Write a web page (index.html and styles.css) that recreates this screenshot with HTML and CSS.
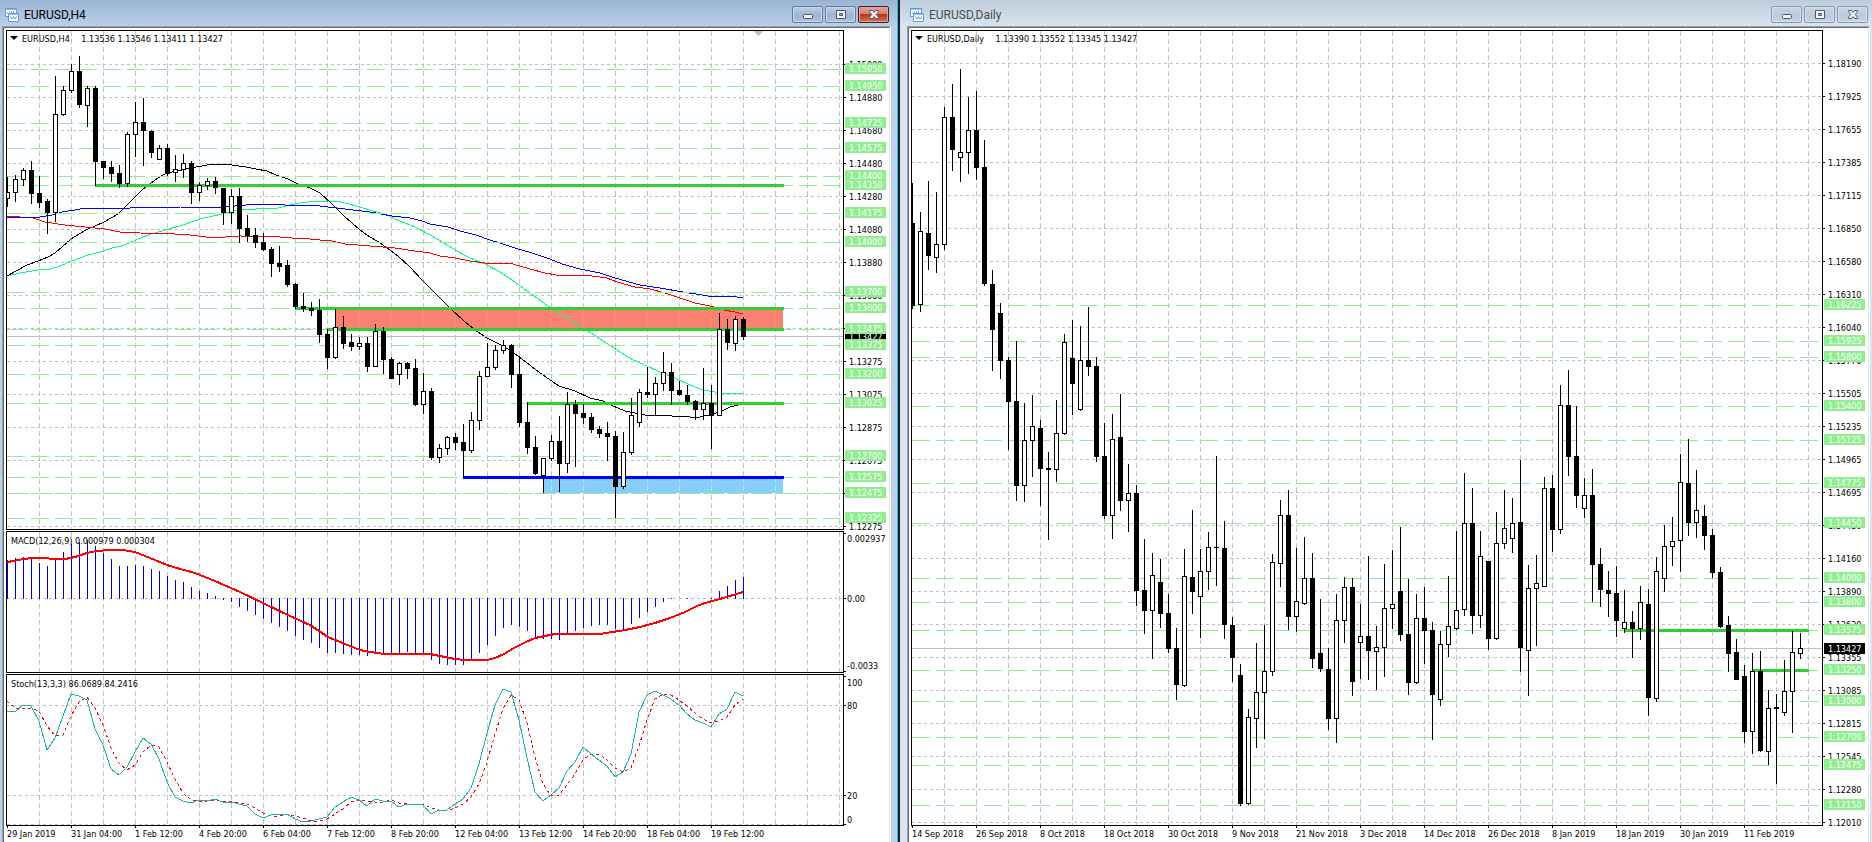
FILE: index.html
```html
<!DOCTYPE html>
<html lang="en">
<head>
    <meta charset="UTF-8">
    <meta name="viewport" content="width=device-width, initial-scale=1.0">
    <title>EURUSD</title>
    <link rel="stylesheet" href="styles.css">
</head>
<body>

    <!-- icons shared by both windows -->
    <svg class="sprite" aria-hidden="true">
      <symbol id="icon-chart" viewBox="0 0 14 14">
        <path d="M.5.5h11v8H.5z" fill="#fff" stroke="#5b9be8"/>
        <path d="M1 1.5h10" stroke="#8ebcf2"/>
        <path d="M2.5 6V4.500M4.500 5V3.500M6.500 5V3.500M8.500 5V3" stroke="#5b9be8"/>
        <path d="M3.500 5.500h10v8h-10z" fill="#fff" stroke="#5b9be8"/>
        <path d="M4 6.500h9" stroke="#8ebcf2"/>
        <path d="M5.500 8.500l1.500 2.500 1.500-2.500 1.500 2.500 1.500-2.500" fill="none" stroke="#5b9be8"/>
      </symbol>
      <symbol id="icon-min" viewBox="0 0 12 11">
        <rect x="1.500" y="5.500" width="9" height="4" rx="1" fill="#f4f4f4" stroke="#535666"/>
      </symbol>
      <symbol id="icon-max" viewBox="0 0 12 11">
        <path d="M1.500 1.500h9v8h-9zM4.500 4.500v2h3v-2z" fill="#f4f4f4" fill-rule="evenodd" stroke="#535666"/>
      </symbol>
      <symbol id="icon-close" viewBox="0 0 12 11">
        <path d="M1.500 1.500h3L6 3.500l1.500-2h3v1.200L8.200 5.500l2.300 2.800v1.200h-3L6 7.500l-1.500 2h-3V8.300l2.300-2.800-2.300-2.800z" fill="#f4f4f4" stroke="#535666"/>
      </symbol>
    </svg>

    <main class="desktop">
      <section class="window is-active">
        <header class="titlebar">
          <svg class="titlebar-icon"><use href="#icon-chart"/></svg>
          <h1>EURUSD,H4</h1>
          <button type="button" aria-label="Minimize"><svg><use href="#icon-min"/></svg></button>
          <button type="button" aria-label="Maximize"><svg><use href="#icon-max"/></svg></button>
          <button type="button" class="close" aria-label="Close"><svg><use href="#icon-close"/></svg></button>
        </header>
        <div class="client">
          <div class="chart">
            <div class="panel price">
              <div class="plot">
                <svg id="h4-plot"></svg>
                <p class="caption symbol"><span>EURUSD,H4</span> 1.13536 1.13546 1.13411 1.13427</p>
              </div>
              <svg class="scale" id="h4-scale"></svg>
            </div>
            <div class="panel macd">
              <div class="plot">
                <svg id="macd-plot"></svg>
                <p class="caption">MACD(12,26,9) 0.000979 0.000304</p>
              </div>
              <svg class="scale" id="macd-scale"></svg>
            </div>
            <div class="panel stoch">
              <div class="plot">
                <svg id="stoch-plot"></svg>
                <p class="caption">Stoch(13,3,3) 86.0689 84.2416</p>
              </div>
              <svg class="scale" id="stoch-scale"></svg>
            </div>
            <ol class="time-axis">
              <li>29 Jan 2019</li>
              <li>31 Jan 04:00</li>
              <li>1 Feb 12:00</li>
              <li>4 Feb 20:00</li>
              <li>6 Feb 04:00</li>
              <li>7 Feb 12:00</li>
              <li>8 Feb 20:00</li>
              <li>12 Feb 04:00</li>
              <li>13 Feb 12:00</li>
              <li>14 Feb 20:00</li>
              <li>18 Feb 04:00</li>
              <li>19 Feb 12:00</li>
            </ol>
          </div>
        </div>
      </section>

      <section class="window">
        <header class="titlebar">
          <svg class="titlebar-icon"><use href="#icon-chart"/></svg>
          <h1>EURUSD,Daily</h1>
          <button type="button" aria-label="Minimize"><svg><use href="#icon-min"/></svg></button>
          <button type="button" aria-label="Maximize"><svg><use href="#icon-max"/></svg></button>
          <button type="button" aria-label="Close"><svg><use href="#icon-close"/></svg></button>
        </header>
        <div class="client">
          <div class="chart">
            <div class="panel price">
              <div class="plot">
                <svg id="daily-plot"></svg>
                <p class="caption symbol"><span>EURUSD,Daily</span> 1.13390 1.13552 1.13345 1.13427</p>
              </div>
              <svg class="scale" id="daily-scale"></svg>
            </div>
            <ol class="time-axis">
              <li>14 Sep 2018</li>
              <li>26 Sep 2018</li>
              <li>8 Oct 2018</li>
              <li>18 Oct 2018</li>
              <li>30 Oct 2018</li>
              <li>9 Nov 2018</li>
              <li>21 Nov 2018</li>
              <li>3 Dec 2018</li>
              <li>14 Dec 2018</li>
              <li>26 Dec 2018</li>
              <li>8 Jan 2019</li>
              <li>18 Jan 2019</li>
              <li>30 Jan 2019</li>
              <li>11 Feb 2019</li>
            </ol>
          </div>
        </div>
      </section>
    </main>

    <script src="charts.js"></script>
</body>
</html>
```

FILE: styles.css
```css
* {
  box-sizing: border-box;
}

body {
  margin: 0;
  font-family: "DejaVu Sans Condensed", "DejaVu Sans", sans-serif;
  font-size: 9px;
  color: #000;
  background: #000;
}

.sprite {
  position: absolute;
  width: 0;
  height: 0;
}

.desktop {
  display: grid;
  grid-template-columns: 898fr 974fr;
  min-height: 100vh;
}

/* windows */

.window {
  display: flex;
  flex-direction: column;
  min-width: 0;
  padding: 0 2px 0 7px;
  border-left: 2px solid #1c1c1c;
  background: linear-gradient(#bfcddb, #d7e4f2 26px);
}

.window.is-active {
  padding: 0 6px 0 2px;
  border-left: 0;
  border-right: 1px solid #35c0e8;
  background: linear-gradient(#99b4d1, #b9d1ea 26px);
}

.titlebar {
  display: flex;
  align-items: center;
  gap: 2px;
  height: 26px;
  padding: 3px 2px 0 3px;
}

.titlebar-icon {
  width: 14px;
  height: 14px;
}

h1 {
  flex: 1;
  margin: 0 0 0 3px;
  font: 12px/16px Roboto, sans-serif;
  color: #4c4c4c;
}

.is-active h1 {
  color: #000;
}

button {
  display: flex;
  align-items: center;
  justify-content: center;
  width: 31px;
  height: 17px;
  padding: 0;
  border: 1px solid #8496b4;
  border-radius: 2px;
  background: linear-gradient(#c9d6e5, #bccbdc 50%, #c5d3e4);
  box-shadow: inset 0 0 0 1px #d6e2f0;
}

button svg {
  width: 12px;
  height: 11px;
}

.is-active button {
  border-color: #5f7a9f;
  background: linear-gradient(#bccfe4, #9db5d0 50%, #a9c2de);
  box-shadow: inset 0 0 0 1px #c8dbee;
}

.is-active .close {
  border-color: #4c1a1f;
  background: linear-gradient(#e2a497, #cf8170 45%, #b8351f 50%, #d4735a);
  box-shadow: inset 0 0 0 1px #dfa598;
}

.client {
  display: flex;
  flex: 1;
  border: 1px solid #a0a0a0;
  border-right-color: #fff;
  border-bottom: 0;
}

.chart {
  display: flex;
  flex: 1;
  flex-direction: column;
  min-width: 0;
  padding: 2px 0 0 2px;
  border: 1px solid #696969;
  border-right-color: #e3e3e3;
  border-bottom: 0;
  background: #fff;
}

/* panels */

.panel {
  display: grid;
  grid-template-columns: 1fr 45px;
}

.price {
  flex: 1;
  min-height: 480px;
}

.macd {
  height: 142px;
  margin: 1px 0;
}

.stoch {
  height: 152px;
}

.plot {
  position: relative;
  min-width: 0;
  border: 1px solid #000;
}

.plot svg {
  position: absolute;
  width: 100%;
  height: 100%;
}

.scale {
  width: 45px;
  height: 100%;
}

.caption {
  position: absolute;
  top: 3px;
  left: 4px;
  margin: 0;
  line-height: 12px;
  white-space: nowrap;
}

.symbol {
  top: 2px;
}

.symbol span {
  margin-right: 9px;
}

.symbol::before {
  content: "";
  display: inline-block;
  margin: 0 4px 2px -1px;
  border: 4px solid transparent;
  border-top-color: #000;
  border-bottom: 0;
}

.time-axis {
  display: flex;
  height: 16px;
  margin: 0;
  padding: 0 0 0 1px;
  overflow: hidden;
  list-style: none;
}

.time-axis li {
  flex: none;
  width: 64px;
  line-height: 12px;
  white-space: nowrap;
}

.time-axis li::before {
  content: "";
  display: block;
  width: 1px;
  height: 2px;
  background: #000;
}

/* drawing */

svg text {
  font-size: 9px;
}

.grid {
  stroke: #c0c0c0;
  stroke-dasharray: 3 3;
}

.grid.column {
  stroke-dasharray: 5 3;
}

.level {
  stroke: #90ee90;
  stroke-dasharray: 18 6;
}

.level-tag {
  fill: #90ee90;
}

.tag-text {
  fill: #fff;
}

.bid {
  stroke: #c0c0c0;
}

.ray {
  stroke: #32cd32;
  stroke-width: 3;
}

.ray.support {
  stroke: #0000ff;
}

.supply {
  fill: #fa8072;
}

.supply-grid {
  stroke: #cfa95b;
  stroke-dasharray: 5 3;
}

.demand {
  fill: #87cefa;
}

.demand-grid {
  stroke: #b4ecc8;
  stroke-dasharray: 5 3;
}

.line {
  fill: none;
  stroke-width: 1;
}

.ma-black { stroke: #000; }
.ma-green { stroke: #00ff7f; }
.ma-blue { stroke: #0000ff; }
.ma-red { stroke: #ff0000; }

.signal {
  stroke: #ff0000;
  stroke-width: 2;
}

.stoch-main {
  stroke: #20b2aa;
}

.stoch-signal {
  stroke: #ff0000;
  stroke-dasharray: 3 3;
}

.bar {
  fill: #0000dd;
}

.up {
  fill: #fff;
  stroke: #000;
}
```

FILE: charts.js
```js
var NS = 'http://www.w3.org/2000/svg';
var STEP = 8;

// [high, body top, body bottom, low, rising]
var h4 = [
  [177,192,199,207,1],[175,179,193,202,1],[168,170,180,186,1],[161,170,194,204,0],[176,193,203,208,0],
  [199,201,213,234,0],[76,114,213,222,1],[86,90,115,116,1],[64,71,91,93,1],[56,71,105,108,0],
  [86,88,106,127,1],[86,88,162,186,0],[161,161,168,179,0],[161,167,174,182,0],[165,173,184,188,0],
  [132,134,184,187,1],[102,122,135,157,1],[98,122,131,166,0],[130,131,153,158,0],[145,148,160,160,1],
  [144,148,174,176,0],[155,169,173,182,1],[154,163,170,178,1],[161,163,193,204,0],[182,185,193,201,1],
  [178,181,186,190,1],[177,181,188,194,0],[188,188,213,225,0],[189,196,213,224,1],[188,196,229,243,0],
  [215,228,236,242,0],[228,235,243,248,0],[233,242,250,251,0],[247,249,264,277,0],[246,263,267,272,0],
  [260,265,285,287,0],[283,284,307,309,0],[293,306,309,312,0],[302,308,311,316,0],[299,310,335,343,0],
  [329,334,358,369,0],[309,327,358,359,1],[316,327,344,349,0],[334,342,347,351,0],[337,343,347,350,1],
  [337,343,367,372,0],[324,331,367,367,1],[327,331,360,374,0],[357,359,379,379,0],[362,363,375,385,1],
  [362,363,369,379,0],[359,368,405,406,0],[373,391,405,414,1],[388,391,458,460,0],[444,448,458,463,1],
  [436,437,449,455,1],[433,437,443,450,0],[424,442,451,478,0],[412,420,451,453,1],[371,376,421,430,1],
  [343,367,377,377,1],[345,350,368,370,1],[340,345,351,354,1],[344,345,375,388,0],[356,374,423,427,0],
  [402,422,448,454,0],[436,447,474,475,0],[458,458,476,493,1],[435,441,459,461,1],[416,441,464,492,0],
  [392,404,464,473,1],[400,404,414,467,0],[404,413,418,424,0],[413,417,430,433,0],[426,429,434,438,0],
  [422,433,437,461,0],[431,436,487,518,0],[432,452,487,489,1],[398,415,453,455,1],[389,392,423,427,1],
  [367,392,395,398,0],[377,383,395,416,1],[352,372,384,391,1],[363,372,391,405,0],[381,390,395,396,0],
  [385,395,402,405,0],[400,401,410,420,0],[368,403,410,420,1],[385,403,416,449,0],[313,329,416,416,1],
  [319,329,343,350,0],[316,319,344,351,1],[317,319,337,340,0]
];

var daily = [
  [183,223,306,309,0],[212,231,305,312,1],[181,233,256,270,0],[192,244,258,273,1],[107,117,245,250,1],
  [84,117,150,171,0],[69,152,158,182,1],[97,130,153,174,1],[91,130,168,180,0],[140,167,284,286,0],
  [270,284,330,371,0],[303,313,361,379,0],[357,360,402,450,0],[341,401,486,501,0],[403,440,486,502,1],
  [395,426,441,477,1],[420,428,469,506,0],[452,468,470,540,0],[400,433,470,482,1],[334,342,434,435,1],
  [320,358,384,415,0],[326,360,410,411,1],[307,360,367,376,0],[357,366,457,462,0],[423,456,516,519,0],
  [414,439,516,539,1],[394,437,501,511,0],[464,493,501,532,1],[485,493,591,606,0],[539,590,611,634,0],
  [553,575,611,659,1],[559,582,614,628,0],[594,613,649,653,0],[628,648,685,700,0],[549,576,686,687,1],
  [510,577,592,614,0],[549,571,597,638,1],[532,547,572,590,1],[456,547,548,586,0],[521,548,625,639,0],
  [617,625,658,682,0],[664,675,804,806,0],[709,717,804,805,1],[643,692,719,748,1],[625,671,693,739,1],
  [554,562,672,676,1],[500,515,564,587,1],[490,515,617,630,0],[548,601,617,632,1],[537,578,604,605,1],
  [553,578,659,668,0],[599,653,669,672,0],[648,669,719,730,0],[594,620,719,743,1],[577,587,621,643,1],
  [578,587,682,696,0],[604,636,643,679,1],[556,636,651,680,0],[626,647,652,690,1],[564,608,648,677,1],
  [550,604,609,629,1],[527,591,635,641,0],[579,634,683,695,0],[594,618,683,684,1],[587,618,631,664,0],
  [622,630,695,740,0],[631,644,700,706,1],[576,626,645,657,1],[531,610,629,630,1],[473,523,610,616,1],
  [488,523,616,634,0],[531,556,616,628,1],[561,561,639,650,0],[512,543,639,640,1],[490,528,544,549,1],
  [498,523,539,553,1],[460,522,648,672,0],[565,588,651,696,1],[555,583,589,646,1],[477,488,587,587,1],
  [475,488,530,552,0],[385,405,530,534,1],[370,405,457,476,0],[406,456,496,508,0],[478,495,509,518,1],
  [469,495,565,602,0],[548,564,590,607,0],[571,590,594,617,0],[566,593,621,637,0],[590,622,629,633,1],
  [611,622,629,658,0],[586,602,629,640,1],[589,604,698,716,0],[557,571,699,702,1],[525,546,579,592,1],
  [517,541,547,566,1],[454,482,541,572,1],[439,483,523,536,0],[470,510,523,538,1],[505,516,536,550,0],
  [529,535,573,578,0],[567,572,627,628,0],[616,625,654,672,0],[639,652,680,680,0],[665,676,732,743,0],
  [653,671,732,754,1],[651,671,751,752,0],[690,708,752,765,1],[694,707,709,784,0],[660,691,713,716,1],
  [631,652,692,733,1],[633,648,654,659,1]
];

// moving averages, x and y pairs
var averages = {
  'ma-green': '0,276 13,273 31,270 43,269 53,266 65,261 81,255 93,252 105,248 115,246 129,240 141,235 158,230 173,226 193,219 215,214 231,210 249,209 271,208 283,205 293,203 311,201 330,201 338,203 353,207 366,211 378,214 388,219 408,227 423,235 437,243 455,254 463,258 478,264 493,272 505,280 520,291 541,306 553,314 578,329 593,339 610,350 626,360 638,365 653,372 668,378 683,385 696,390 708,392 720,394 731,393 736,394',
  'ma-black': '0,276 20,265 31,261 41,257 48,253 55,247 64,239 72,234 81,229 88,226 97,222 111,214 121,204 135,190 143,184 151,178 160,173 171,171 183,168 195,166 205,164 213,164 225,165 239,167 249,169 260,171 269,175 281,179 291,184 303,188 313,193 325,204 337,216 353,230 360,235 373,243 383,250 391,256 403,267 416,281 430,295 443,308 457,321 468,330 480,338 496,346 504,351 515,359 533,373 552,386 568,391 583,398 596,401 606,406 618,411 633,414 643,416 655,415 665,416 683,417 693,417 706,414 715,411 723,407 731,405',
  'ma-red': '0,216 26,218 38,222 58,225 78,227 98,229 113,232 133,233 168,234 183,235 199,237 218,237 233,236 273,237 285,238 303,239 313,240 325,241 338,244 363,246 388,248 408,251 423,253 433,256 448,258 463,261 478,263 506,264 523,269 538,273 549,275 578,275 600,278 610,282 628,287 643,289 658,293 673,298 688,303 703,306 717,310 728,312 736,314',
  'ma-blue': '0,217 33,217 45,215 55,212 68,210 79,208 123,208 148,207 173,207 208,208 228,206 251,204 278,205 298,205 313,206 338,209 363,212 385,216 403,218 415,221 423,224 441,227 453,231 469,235 483,240 493,243 508,248 525,253 543,259 555,264 573,269 593,273 608,278 633,285 653,288 676,292 701,296 730,297 736,298'
};

var macdBars = [
  560,558,557,558,563,566,560,552,544,542,540,546,553,559,566,566,565,566,569,571,576,580,582,587,
  591,593,596,600,602,607,611,615,619,623,627,631,636,640,643,648,653,653,654,655,655,656,653,654,
  654,654,652,654,654,660,664,665,665,665,659,653,645,636,628,625,627,631,638,639,639,640,634,631,
  628,626,625,625,629,630,624,618,612,607,602,599,598,599,598,598,599,591,586,580,577
];

var macdSignal = '0,562 7,561 16,559 26,558 58,559 68,557 80,553 89,551 103,550 116,550 128,552 138,556 148,560 160,565 173,569 188,573 208,581 233,592 258,604 283,616 303,625 321,637 338,644 353,650 363,652 378,654 423,654 433,656 448,659 458,660 480,660 488,658 497,654 507,648 519,642 528,638 538,636 548,634 593,634 618,630 633,627 648,623 663,618 678,612 690,606 698,603 713,599 723,596 733,593 736,592';

var stochMain = [
  711,712,705,706,721,750,738,716,694,696,700,729,745,769,775,767,752,738,744,759,782,797,801,803,
  800,801,799,802,802,804,806,814,818,815,814,814,819,822,821,819,817,807,802,797,800,806,799,801,
  801,807,804,804,805,814,810,810,804,799,788,764,733,705,689,692,720,758,792,801,795,788,771,762,
  747,754,760,766,777,772,754,712,695,691,695,699,705,714,720,723,727,714,709,692,696
];

function el (parent, name, attrs, text) {
  var node = document.createElementNS(NS, name);
  for (var key in attrs) {
    node.setAttribute(key, attrs[key]);
  }
  if (text) node.textContent = text;
  parent.appendChild(node);
  return node;
}

// every panel draws in window coordinates, shifted up by its own top
function layer (id, top) {
  return el(document.getElementById(id), 'g', {
    transform: 'translate(0,' + -top + ')',
    'shape-rendering': 'crispEdges'
  });
}

function hline (g, cls, y, x1, x2) {
  el(g, 'line', { 'class': cls, x1: x1 || 0, x2: x2 || '100%', y1: y + 0.5, y2: y + 0.5 });
}

function columns (g, top, bottom) {
  for (var x = 32; x < 2400; x += 32) {
    el(g, 'line', { 'class': 'grid column', x1: x + 0.5, x2: x + 0.5, y1: top, y2: bottom });
  }
}

function zone (g, cls, x, y, w, h) {
  el(g, 'rect', { 'class': cls, x: x, y: y, width: w, height: h });
  for (var c = Math.ceil((x + 1) / 32) * 32; c < x + w; c += 32) {
    el(g, 'line', { 'class': cls + '-grid', x1: c + 0.5, x2: c + 0.5, y1: y, y2: y + h });
  }
}

function line (g, cls, points) {
  el(g, 'polyline', { 'class': 'line ' + cls, points: points });
}

function candles (g, data) {
  data.forEach(function (c, i) {
    var x = i * STEP;
    el(g, 'rect', { x: x, y: c[0], width: 1, height: c[3] - c[0] });
    if (c[4]) {
      el(g, 'rect', { 'class': 'up', x: x - 1.5, y: c[1] + 0.5, width: 4, height: c[2] - c[1] - 1 });
    } else {
      el(g, 'rect', { x: x - 2, y: c[1], width: 5, height: c[2] - c[1] });
    }
  });
}

function tick (g, y) {
  el(g, 'rect', { x: 0, y: y, width: 2, height: 1 });
}

function priceScale (g, first, labels, levels, bid) {
  labels.forEach(function (label, i) {
    tick(g, first + i * 33);
    el(g, 'text', { x: 5, y: first + i * 33 + 4 }, label);
  });
  el(g, 'rect', { x: 1, y: bid - 5, width: 41, height: 11 });
  el(g, 'text', { 'class': 'tag-text', x: 5, y: bid + 4 }, '1.13427');
  levels.forEach(function (level) {
    el(g, 'rect', { 'class': 'level-tag', x: 1, y: level[0] - 6, width: 41, height: 11 });
    el(g, 'text', { 'class': 'tag-text', x: 5, y: level[0] + 3 }, level[1]);
  });
}

function drawH4 () {
  var levels = [
    [69, '1.15050'], [86, '1.14950'], [123, '1.14725'], [148, '1.14575'], [176, '1.14400'],
    [185, '1.14350'], [213, '1.14175'], [242, '1.14000'], [292, '1.13700'], [308, '1.13600'],
    [329, '1.13475'], [345, '1.13375'], [374, '1.13200'], [403, '1.13025'], [456, '1.12700'],
    [477, '1.12575'], [493, '1.12475'], [518, '1.12325']
  ];
  var labels = ['1.15080', '1.14880', '1.14680', '1.14480', '1.14280', '1.14080', '1.13880', '1.13680',
    '1.13475', '1.13275', '1.13075', '1.12875', '1.12675', '1.12475', '1.12275'];
  var g = layer('h4-plot', 31);

  columns(g, 31, 1400);
  labels.forEach(function (l, i) {
    hline(g, 'grid', 64 + i * 33);
  });
  zone(g, 'supply', 329, 309, 447, 19);
  zone(g, 'demand', 536, 478, 240, 15);
  for (var name in averages) {
    line(g, name, averages[name]);
  }
  levels.forEach(function (level) {
    hline(g, 'level', level[0]);
  });
  hline(g, 'bid', 336);
  hline(g, 'ray', 185, 88, 777);
  hline(g, 'ray', 308, 288, 777);
  hline(g, 'ray', 329, 320, 777);
  hline(g, 'ray', 403, 520, 777);
  hline(g, 'ray support', 477, 456, 777);
  candles(g, h4);
  // chart shift marker
  el(g, 'path', { d: 'M747 31h9l-4.500 5z', fill: '#c0c0c0' });

  priceScale(layer('h4-scale', 30), 64, labels, levels, 336);
}

function drawDaily () {
  var levels = [
    [305, '1.16225'], [341, '1.15925'], [357, '1.15800'], [406, '1.15400'], [440, '1.15125'],
    [483, '1.14775'], [523, '1.14450'], [578, '1.14000'], [602, '1.13800'], [630, '1.13575'],
    [670, '1.13250'], [701, '1.13000'], [737, '1.12700'], [765, '1.12475'], [805, '1.12150']
  ];
  var labels = ['1.18190', '1.17925', '1.17655', '1.17385', '1.17115', '1.16850', '1.16580', '1.16310',
    '1.16040', '1.15770', '1.15505', '1.15235', '1.14965', '1.14695', '1.14430', '1.14160', '1.13890',
    '1.13620', '1.13355', '1.13085', '1.12815', '1.12545', '1.12280', '1.12010'];
  var g = layer('daily-plot', 31);

  columns(g, 31, 1400);
  labels.forEach(function (l, i) {
    hline(g, 'grid', 63 + i * 33);
  });
  levels.forEach(function (level) {
    hline(g, 'level', level[0]);
  });
  hline(g, 'bid', 648);
  hline(g, 'ray', 630, 713, 897);
  hline(g, 'ray', 670, 841, 897);
  candles(g, daily);

  priceScale(layer('daily-scale', 30), 63, labels, levels, 648);
}

function drawMacd () {
  var g = layer('macd-plot', 532);
  columns(g, 532, 672);
  hline(g, 'grid', 598);
  macdBars.forEach(function (y, i) {
    var top = Math.min(y, 598);
    var bottom = Math.max(y, 599);
    if (y !== 598) {
      el(g, 'rect', { 'class': 'bar', x: i * STEP, y: top, width: 1, height: bottom - top });
    }
  });
  line(g, 'signal', macdSignal);

  var s = layer('macd-scale', 531);
  tick(s, 533);
  tick(s, 598);
  tick(s, 671);
  el(s, 'text', { x: 3, y: 542 }, '0.002937');
  el(s, 'text', { x: 3, y: 602 }, '0.00');
  el(s, 'text', { x: 3, y: 669 }, '-0.0033');
}

function drawStoch () {
  var g = layer('stoch-plot', 675);
  var main = [];
  var signal = ['0,701', '8,708'];

  columns(g, 675, 825);
  hline(g, 'grid', 705);
  hline(g, 'grid', 795);
  hline(g, 'grid', 824);
  stochMain.forEach(function (y, i) {
    main.push(i * STEP + ',' + y);
    if (i > 1) {
      signal.push(i * STEP + ',' + Math.round((y + stochMain[i - 1] + stochMain[i - 2]) / 3));
    }
  });
  line(g, 'stoch-signal', signal.join(' '));
  line(g, 'stoch-main', main.join(' '));

  var s = layer('stoch-scale', 674);
  [676, 705, 795, 824].forEach(function (y) {
    tick(s, y);
  });
  el(s, 'text', { x: 3, y: 686 }, '100');
  el(s, 'text', { x: 3, y: 709 }, '80');
  el(s, 'text', { x: 3, y: 799 }, '20');
  el(s, 'text', { x: 3, y: 823 }, '0');
}

drawH4();
drawDaily();
drawMacd();
drawStoch();
```
